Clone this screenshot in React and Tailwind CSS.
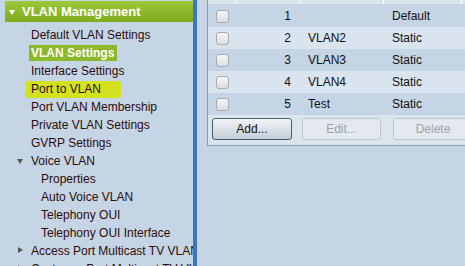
import React from "react";

const menuItems = [
  { label: "Default VLAN Settings", level: 1 },
  { label: "VLAN Settings", level: 1, active: true },
  { label: "Interface Settings", level: 1 },
  { label: "Port to VLAN", level: 1, marked: true },
  { label: "Port VLAN Membership", level: 1 },
  { label: "Private VLAN Settings", level: 1 },
  { label: "GVRP Settings", level: 1 },
  { label: "Voice VLAN", level: 1, toggle: "open" },
  { label: "Properties", level: 2 },
  { label: "Auto Voice VLAN", level: 2 },
  { label: "Telephony OUI", level: 2 },
  { label: "Telephony OUI Interface", level: 2 },
  { label: "Access Port Multicast TV VLAN", level: 1, toggle: "closed" },
  { label: "Customer Port Multicast TV VLAN", level: 1, toggle: "closed" },
];

const vlans = [
  { id: 1, name: "", type: "Default" },
  { id: 2, name: "VLAN2", type: "Static" },
  { id: 3, name: "VLAN3", type: "Static" },
  { id: 4, name: "VLAN4", type: "Static" },
  { id: 5, name: "Test", type: "Static" },
];

const Checkbox = () => (
  <div className="w-[13px] h-[13px] rounded-[3px] border border-[#a3abb3] bg-gradient-to-b from-[#f7f7f7] to-[#dedede]" />
);

const MenuItem = ({ item }) => {
  let labelClass = "ml-[26px] text-[#2e0b0b]";
  if (item.level === 2) labelClass = "ml-[36px] text-[#2e0b0b]";
  if (item.active)
    labelClass = "ml-[24px] px-[2px] pr-[3px] leading-[16px] bg-[#8cb82a] text-white font-bold";
  if (item.marked)
    labelClass = "ml-[21px] pl-[5px] pr-[20px] leading-[17px] rounded-[2px] bg-[#d2e21e] text-[#2e0b0b]";

  return (
    <div className="h-[18px] flex items-center relative whitespace-nowrap">
      {item.toggle === "open" && (
        <span className="absolute left-[12px] top-[7px] w-0 h-0 border-l-[3.5px] border-r-[3.5px] border-t-[5px] border-l-transparent border-r-transparent border-t-[#555]" />
      )}
      {item.toggle === "closed" && (
        <span className="absolute left-[13px] top-[5px] w-0 h-0 border-t-[3.5px] border-b-[3.5px] border-l-[5px] border-t-transparent border-b-transparent border-l-[#555]" />
      )}
      <span className={labelClass}>{item.label}</span>
    </div>
  );
};

export default function App() {
  return (
    <div className="flex w-[465px] h-[266px] overflow-hidden bg-[#c5d5e5] font-['Liberation_Sans',Arial,sans-serif] text-[12px]">
      {/* Sidebar */}
      <aside className="w-[193px] shrink-0 pl-[5px] pt-[1px] overflow-hidden">
        <div className="h-[21px] flex items-center bg-gradient-to-b from-[#9cc83a] to-[#7eab1c] text-white font-bold text-[13px] relative">
          <span className="absolute left-[4px] top-[9px] w-0 h-0 border-l-[3.5px] border-r-[3.5px] border-t-[5px] border-l-transparent border-r-transparent border-t-white" />
          <span className="ml-[17px]">VLAN Management</span>
        </div>
        <div className="pt-[4px]">
          {menuItems.map((item) => (
            <MenuItem key={item.label} item={item} />
          ))}
        </div>
      </aside>

      <div className="w-[4px] shrink-0 bg-[#3b78be]" />

      {/* Content */}
      <main className="flex-1 pl-[10px] overflow-hidden">
        <div className="w-[290px] border-l border-b border-[#8a9ba8] bg-[#dbe5ee]">
          <div className="h-[5px] flex border-b border-[#c5d2dd]">
            <div className="w-[29px] border-r border-white" />
            <div className="w-[63px] border-r border-white" />
            <div className="w-[84px] border-r border-white" />
            <div className="w-[78px] border-r border-white" />
          </div>
          {vlans.map((v, i) => (
            <div
              key={v.id}
              className={`h-[22px] flex items-center text-[#111] ${
                i % 2 === 0 ? "bg-[#c5d5e5]" : "bg-[#d9e4ef]"
              }`}
            >
              <div className="w-[29px] flex justify-center">
                <Checkbox />
              </div>
              <div className="w-[63px] text-right pr-[9px]">{v.id}</div>
              <div className="w-[84px] pl-[8px]">{v.name}</div>
              <div className="w-[78px] pl-[8px]">{v.type}</div>
            </div>
          ))}
          <div className="flex items-center gap-[10px] pl-[4px] pt-[3px] pb-[5px]">
            <button className="w-[80px] h-[22px] rounded-[3px] border border-[#4d5b68] bg-gradient-to-b from-[#f2f5f8] to-[#c3ced8] text-[#111]">
              Add...
            </button>
            <button className="w-[79px] h-[22px] rounded-[3px] border border-[#bcc6cf] bg-[#e3e9ef] text-[#9aa3ab]">
              Edit...
            </button>
            <button className="ml-[2px] w-[80px] h-[22px] rounded-[3px] border border-[#bcc6cf] bg-[#e3e9ef] text-[#9aa3ab]">
              Delete
            </button>
          </div>
        </div>
      </main>
    </div>
  );
}
